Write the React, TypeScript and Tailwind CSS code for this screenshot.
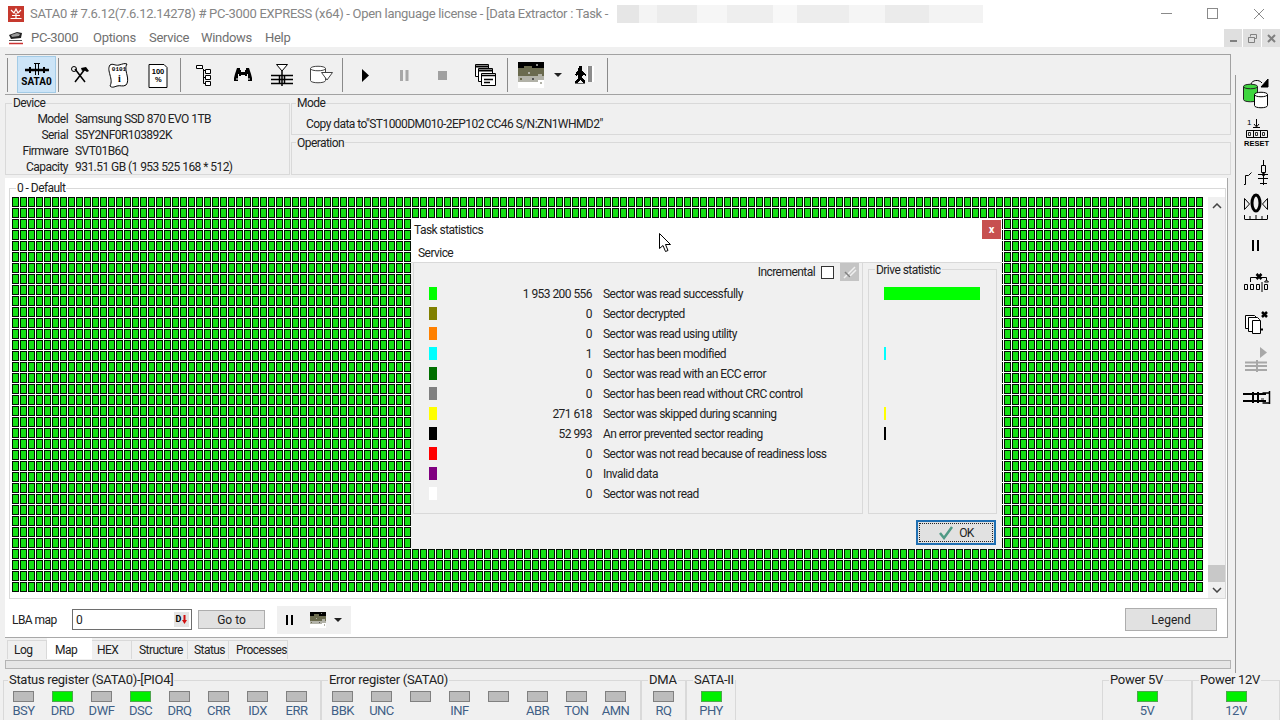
import { ReactNode } from "react";

const mapCells = Array.from({ length: 149 * 36 });

const statRows = [
  { color: "bg-[#00ff00]", value: "1 953 200 556", label: "Sector was read successfully", bar: "w-[96px] bg-[#00ff00]" },
  { color: "bg-[#808000]", value: "0", label: "Sector decrypted" },
  { color: "bg-[#ff8000]", value: "0", label: "Sector was read using utility" },
  { color: "bg-[#00ffff]", value: "1", label: "Sector has been modified", bar: "w-[2px] bg-[#00ffff]" },
  { color: "bg-[#006f00]", value: "0", label: "Sector was read with an ECC error" },
  { color: "bg-[#808080]", value: "0", label: "Sector has been read without CRC control" },
  { color: "bg-[#ffff00]", value: "271 618", label: "Sector was skipped during scanning", bar: "w-[2px] bg-[#ffff00]" },
  { color: "bg-[#000000]", value: "52 993", label: "An error prevented sector reading", bar: "w-[2px] bg-[#000000]" },
  { color: "bg-[#ff0000]", value: "0", label: "Sector was not read because of readiness loss" },
  { color: "bg-[#800080]", value: "0", label: "Invalid data" },
  { color: "bg-[#ffffff]", value: "0", label: "Sector was not read" },
];

const deviceRows = [
  ["Model", "Samsung SSD 870 EVO 1TB"],
  ["Serial", "S5Y2NF0R103892K"],
  ["Firmware", "SVT01B6Q"],
  ["Capacity", "931.51 GB (1 953 525 168 * 512)"],
];

const redaction = [
  ["w-[22px]", "bg-[#e6e6e6]"],
  ["w-[18px]", "bg-[#f4f4f4]"],
  ["w-[40px]", "bg-[#ececec]"],
  ["w-[30px]", "bg-[#f6f6f6]"],
  ["w-[46px]", "bg-[#eeeeee]"],
  ["w-[24px]", "bg-[#f8f8f8]"],
  ["w-[52px]", "bg-[#ededed]"],
  ["w-[36px]", "bg-[#f5f5f5]"],
  ["w-[44px]", "bg-[#ebebeb]"],
  ["w-[54px]", "bg-[#f3f3f3]"],
];

const tabs = [
  ["Log", "w-[40px] pl-[6px] border-l"],
  ["Map", "w-[45px] pl-[8px]"],
  ["HEX", "w-[40px] pl-[5px]"],
  ["Structure", "w-[56px] pl-[7px]"],
  ["Status", "w-[41px] pl-[6px]"],
  ["Processes", "w-[59px] pl-[7px]"],
];

function Sep() {
  return <div className="h-[34px] w-px shrink-0 bg-[#8a8a8a]" />;
}

function Tool({ children, className = "" }: { children: ReactNode; className?: string }) {
  return <div className={`flex h-[32px] w-[39px] shrink-0 items-center justify-center ${className}`}>{children}</div>;
}

function Icon({ children }: { children: ReactNode }) {
  return (
    <svg width="32" height="32" viewBox="0 0 32 32" fill="none" stroke="#000" strokeWidth="1">
      {children}
    </svg>
  );
}

function Thumb({ size }: { size: number }) {
  return (
    <svg width={size} height={size} viewBox="0 0 13 13" shapeRendering="crispEdges" className="shrink-0">
      <rect width="13" height="13" fill="#fff" />
      <rect width="13" height="4" fill="#000" />
      <rect y="3" width="13" height="4" fill="#6a6a4e" />
      <rect y="7" width="13" height="3" fill="#b2b2a8" />
      <rect x="3" y="2" width="4" height="2" fill="#6a6a4e" />
      <rect x="8" y="3" width="5" height="1" fill="#6a6a4e" />
      <rect x="9" y="1" width="1" height="1" fill="#8a8a8a" />
      <rect x="5" y="5" width="1" height="1" fill="#b2b2a8" />
      <rect x="10" y="6" width="2" height="1" fill="#b2b2a8" />
      <rect x="1" y="8" width="1" height="1" fill="#6a6a4e" />
      <rect x="7" y="8" width="1" height="1" fill="#555" />
      <rect x="10" y="9" width="3" height="1" fill="#fff" />
      <rect x="11" y="10" width="1" height="1" fill="#b2b2a8" />
    </svg>
  );
}

function Caret() {
  return <div className="h-0 w-0 shrink-0 border-x-[4px] border-t-[4px] border-x-transparent border-t-[#222]" />;
}

function Group({
  title,
  className = "",
  legend = "-top-[8px] left-[6px]",
  children,
}: {
  title: string;
  className?: string;
  legend?: string;
  children?: ReactNode;
}) {
  return (
    <div className={`relative border border-[#d9d9d9] ${className}`}>
      <span className={`absolute bg-[#f0f0f0] px-px leading-[14px] ${legend}`}>{title}</span>
      {children}
    </div>
  );
}

function Led({ on, label }: { on?: boolean; label?: string }) {
  return (
    <div className="flex w-[39px] shrink-0 flex-col items-center pt-[10px]">
      <div className={`h-[11px] w-[21px] border ${on ? "border-[#4fa54f] bg-[#00f000]" : "border-[#808080] bg-[#bcbcbc]"}`} />
      <span className="mt-[2px] h-[14px] text-[13px] leading-[14px] tracking-[-0.5px] text-[#3f5f86]">{label}</span>
    </div>
  );
}

function RegGroup({
  title,
  className,
  children,
  legend = "left-[6px]",
  center,
}: {
  title: string;
  className: string;
  children: ReactNode;
  legend?: string;
  center?: boolean;
}) {
  return (
    <div className={`relative h-[40px] shrink-0 border-x border-t border-[#d9d9d9] ${className}`}>
      <span className={`absolute -top-[8px] whitespace-nowrap bg-[#f0f0f0] px-px text-[13px] leading-[14px] tracking-[-0.3px] text-[#222] ${legend}`}>
        {title}
      </span>
      <div className={`flex ${center ? "justify-center" : ""}`}>{children}</div>
    </div>
  );
}

const sideIcons: { mt: string; icon: ReactNode }[] = [
  {
    mt: "mt-[2px]",
    icon: (
      <Icon>
        <path d="M3.5 9.5c0-3 14-3 14 0v13c0 3-14 3-14 0z" fill="#3fd63f" stroke="#222" />
        <path d="M3.5 9.5c0 3 14 3 14 0" stroke="#222" />
        <path d="M14.5 17.5c0-3 13-3 13 0v11c0 3-13 3-13 0z" fill="#fff" />
        <path d="M14.5 17.5c0 3 13 3 13 0" />
        <path d="M11 7c1-4 8-5 11-1" />
        <path d="M28 2v8h-7z" fill="#000" />
      </Icon>
    ),
  },
  {
    mt: "mt-[7px]",
    icon: (
      <Icon>
        <text x="7" y="9" fontSize="8" fill="#000" stroke="none" fontFamily="Liberation Sans, sans-serif">1</text>
        <path d="M16.500 3v7M14 8l2.500 3L19 8M13 11.500h7" />
        <path d="M6.500 14.500h21v7h-21zM13.500 14.500v7M20.500 14.500v7" />
        <path d="M8.500 16.500h2v3h-2zM15.500 16.500h2v3h-2zM22.500 16.500h2v3h-2z" strokeWidth="0.8" />
        <text x="16.500" y="30" textAnchor="middle" fontSize="7.500" fontWeight="700" letterSpacing="0" fill="#000" stroke="none" fontFamily="Liberation Sans, sans-serif">RESET</text>
      </Icon>
    ),
  },
  {
    mt: "mt-[8px]",
    icon: (
      <Icon>
        <path d="M4 28.500h1.500v-9h3l3-3" />
        <path d="M23.500 4v6M23.500 16v13" />
        <path d="M21.500 9.500h4v7h-4z" />
        <path d="M18 18.500h10M18 22.500h10M20 27.500h7" />
        <circle cx="23.500" cy="18.500" r="1.200" fill="#000" />
      </Icon>
    ),
  },
  {
    mt: "mt-[3px]",
    icon: (
      <Icon>
        <path d="M4.500 7.500l5 5.500-5 5.500zM27.500 7.500l-5 5.500 5 5.500z" />
        <ellipse cx="16" cy="12" rx="4" ry="8" strokeWidth="3" />
        <path d="M4.500 28.500h23M4.500 24v4M10 25v3M16 24v4M22 25v3M27.500 24v4" />
      </Icon>
    ),
  },
  {
    mt: "mt-[7px]",
    icon: (
      <Icon>
        <path d="M12 10h2v11h-2zM17 10h2v11h-2z" fill="#000" stroke="none" />
      </Icon>
    ),
  },
  {
    mt: "mt-[6px]",
    icon: (
      <Icon>
        <path d="M10.500 14v-4.500h16v3M26.500 12l-2 2h4z" />
        <path d="M16.500 6l5 5M21.500 6l-5 5" strokeWidth="2.500" />
        <path d="M4.500 16.500h3v5h-3zM10.500 16.500h3v5h-3zM16.500 16.500h3v5h-3zM24.500 16.500h3v5h-3z" />
        <path d="M22 14v10" />
      </Icon>
    ),
  },
  {
    mt: "mt-[6px]",
    icon: (
      <Icon>
        <path d="M5.500 9.500h9l2 2v11h-11z" fill="#fff" />
        <path d="M8.500 11.500h9l2 2v12h-11z" fill="#fff" />
        <path d="M12.500 14.500h8v13h-8z" fill="#fff" />
        <path d="M20 23.500h3" strokeWidth="2" />
        <path d="M22 6l5 5M27 6l-5 5" strokeWidth="2.500" />
      </Icon>
    ),
  },
  {
    mt: "mt-[9px]",
    icon: (
      <Icon>
        <path d="M20 0l7 5.500-7 5.500z" fill="#a8a8a8" stroke="none" />
        <path d="M5 15.500h22M5 19h22M5 23h22" stroke="#a8a8a8" strokeWidth="2" />
        <path d="M17 13v12" stroke="#a8a8a8" strokeWidth="2" />
      </Icon>
    ),
  },
  {
    mt: "mt-[3px]",
    icon: (
      <Icon>
        <path d="M3 12h23M3 19h23" strokeWidth="2" />
        <path d="M13 10v11M18 10v11" strokeWidth="2" />
        <path d="M22.500 11h7v10h-7M29.500 9v13" strokeWidth="1.500" />
        <path d="M21 17h3" stroke="#888" strokeWidth="2" />
      </Icon>
    ),
  },
];

export default function App() {
  return (
    <div className="relative flex h-[720px] w-[1280px] flex-col overflow-hidden bg-[#f0f0f0] font-['Roboto',sans-serif] text-[12px] tracking-[-0.55px] text-[#222]">
      {/* title bar */}
      <div className="flex h-[27px] shrink-0 items-center bg-white text-[13px] tracking-[-0.3px] text-[#858585]">
        <div className="ml-[8px] flex h-[16px] w-[16px] shrink-0 items-center justify-center bg-[#c6392e]">
          <svg width="14" height="14" viewBox="0 0 14 14" stroke="#fff" fill="none" strokeWidth="1.200">
            <path d="M2 3l3 3 2-4 2 4 3-3M7 6v6M1.500 11.500h11M3 8.500h8" />
          </svg>
        </div>
        <span className="ml-[6px] w-[587px] shrink-0 whitespace-nowrap">
          SATA0 # 7.6.12(7.6.12.14278) # PC-3000 EXPRESS (x64) - Open language license - [Data Extractor : Task -
        </span>
        <div className="flex h-[18px]">
          {redaction.map(([w, c], i) => (
            <div key={i} className={`${w} ${c}`} />
          ))}
        </div>
        <div className="ml-auto flex items-center">
          <div className="h-px w-[11px] bg-[#8a8a8a]" />
          <div className="ml-[35px] h-[11px] w-[11px] border border-[#8a8a8a]" />
          <svg width="12" height="12" viewBox="0 0 12 12" stroke="#8a8a8a" className="ml-[35px] mr-[15px]">
            <path d="M1 1l10 10M11 1L1 11" />
          </svg>
        </div>
      </div>

      {/* menu bar */}
      <div className="relative flex h-[20px] shrink-0 items-center bg-white pt-px text-[13px] tracking-[-0.3px] text-[#707070]">
        <svg width="16" height="14" viewBox="0 0 16 14" className="ml-[8px] shrink-0">
          <path d="M1 4l8-3 5 1-1 5-10 1z" fill="#222" />
          <path d="M3 4l6-2 3 1-1 2-7 1z" fill="#999" />
          <path d="M1 9.500h13" stroke="#555" />
          <path d="M1 12.500h14" stroke="#c33" strokeWidth="1.500" />
        </svg>
        <span className="ml-[7px] w-[62px] shrink-0">PC-3000</span>
        <span className="w-[56px] shrink-0">Options</span>
        <span className="w-[52px] shrink-0">Service</span>
        <span className="w-[64px] shrink-0">Windows</span>
        <span>Help</span>
        <div className="ml-auto flex gap-px self-start pt-[1px]">
          <div className="flex h-[18px] w-[18px] items-center justify-center bg-[#dfdfdf]">
            <div className="mt-[5px] h-[2px] w-[7px] bg-[#808080]" />
          </div>
          <div className="flex h-[18px] w-[18px] items-center justify-center bg-[#dfdfdf]">
            <svg width="9" height="9" viewBox="0 0 9 9" fill="none" stroke="#808080">
              <path d="M2.500 2.500v-2h6v4h-2M.5 3.500h6v5h-6zM.5 3.500h6" />
            </svg>
          </div>
          <div className="flex h-[18px] w-[18px] items-center justify-center bg-[#dfdfdf]">
            <svg width="9" height="9" viewBox="0 0 9 9" fill="none" stroke="#808080" strokeWidth="2">
              <path d="M1 1l7 7M8 1L1 8" />
            </svg>
          </div>
        </div>
      </div>

      <div className="flex h-[628px] shrink-0">
        {/* left column */}
        <div className="w-[1235px] shrink-0 pl-[5px] pr-[4px]">
          {/* toolbar */}
          <div className="mt-[7px] flex h-[41px] items-center border-y border-r border-[#a2a2a2]">
            <div className="ml-[2px]"><Sep /></div>
            <div className="ml-[9px] flex h-[37px] w-[39px] shrink-0 flex-col items-center border border-[#a3cbe6] bg-[#cce4f7]">
              <svg width="30" height="20" viewBox="0 0 30 20" stroke="#000" fill="none">
                <path d="M3 13h24" strokeWidth="2.500" />
                <path d="M13.500 6v12M16.500 6v12M12 6.500h6" />
                <path d="M8 10v6M22 10v6" strokeWidth="2" />
              </svg>
              <span className="mt-[-1px] text-[10px] font-bold leading-[12px] tracking-normal text-black">SATA0</span>
            </div>
            <div className="ml-[2px]"><Sep /></div>
            <Tool className="ml-px">
              <Icon>
                <path d="M11 10l10 13M21 10L11 23" strokeWidth="1.500" />
                <path d="M17 9l5-1 3 4-2 1-3-2-2 1z" fill="#000" stroke="none" />
                <circle cx="10" cy="10" r="2.500" />
              </Icon>
            </Tool>
            <Tool>
              <Icon>
                <path d="M7 6c3-2 5 1 9 0s5-2 8-1c-2 3-1 7 0 11s1 8-1 10c-3 2-6 0-9 1s-5 2-7 0c2-4 1-7 0-11S5 9 7 6z" fill="#fff" />
                <text x="16" y="12" textAnchor="middle" fontSize="6" fontWeight="700" letterSpacing="0" fill="#000" stroke="none" fontFamily="Liberation Mono, monospace">0101</text>
                <text x="16" y="23" textAnchor="middle" fontSize="10" fontWeight="700" fill="#000" stroke="none" fontFamily="Liberation Serif, serif">i</text>
              </Icon>
            </Tool>
            <Tool>
              <Icon>
                <path d="M7 5.500h15l3 3v20H7z" fill="#fff" />
                <text x="16" y="15" textAnchor="middle" fontSize="7.500" fontWeight="700" letterSpacing="0" fill="#000" stroke="none" fontFamily="Liberation Sans, sans-serif">100</text>
                <text x="16" y="23" textAnchor="middle" fontSize="7.500" fontWeight="700" fill="#000" stroke="none" fontFamily="Liberation Sans, sans-serif">%</text>
              </Icon>
            </Tool>
            <div className="ml-[3px]"><Sep /></div>
            <Tool className="ml-[3px]">
              <Icon>
                <path d="M8.500 6.500h6v3h-6zM17.500 10.500h5v4h-5zM17.500 16.500h5v4h-5zM17.500 22.500h5v4h-5z" fill="#fff" />
                <path d="M14 9l3 3M15.500 10v14.500h2M15.500 18.500h2" />
              </Icon>
            </Tool>
            <Tool>
              <Icon>
                <path d="M10 9h3v2h1v6h-2v-2h-1v7H7v-3l1-4z" fill="#000" stroke="none" />
                <path d="M22 9h-3v2h-1v6h2v-2h1v7h4v-3l-1-4z" fill="#000" stroke="none" />
                <path d="M14 13h4v3h-4z" fill="#000" stroke="none" />
                <path d="M9 20h2M21 20h2" stroke="#fff" />
              </Icon>
            </Tool>
            <Tool>
              <Icon>
                <path d="M10.500 5.500h11L16 12z" fill="#fff" />
                <path d="M5 16.500h22M5 20.500h22M5 24.500h22" strokeWidth="1.500" />
                <path d="M16 12v15M13.500 16v9M18.500 16v9" strokeWidth="1.500" />
              </Icon>
            </Tool>
            <Tool>
              <Icon>
                <path d="M5.500 9.500c0-3 15-3 15 0v12c0 3-15 3-15 0z" fill="#fff" stroke="#444" />
                <path d="M5.500 9.500c0 3 15 3 15 0" stroke="#444" />
                <path d="M16.500 13.500h11L22 21z" fill="#fff" stroke="#444" />
              </Icon>
            </Tool>
            <div className="ml-[2px]"><Sep /></div>
            <Tool className="ml-[3px]">
              <Icon>
                <path d="M12 10l7 6.500L12 23z" fill="#000" stroke="none" />
              </Icon>
            </Tool>
            <Tool>
              <Icon>
                <path d="M11 11h3v11h-3zM16.500 11h3v11h-3z" fill="#a8a8a8" stroke="none" />
              </Icon>
            </Tool>
            <Tool>
              <Icon>
                <path d="M10 12h9v9h-9z" fill="#a0a0a0" stroke="none" />
              </Icon>
            </Tool>
            <Tool className="ml-[3px]">
              <Icon>
                <path d="M5.500 5.500h13v12h-13z" fill="#fff" />
                <path d="M5.500 7.500h13" strokeWidth="2" />
                <path d="M8.500 9.500h14v13h-14z" fill="#fff" />
                <path d="M8.500 11.500h14" strokeWidth="2" />
                <path d="M11.500 14.500h14v12h-14z" fill="#fff" />
                <path d="M11.500 16.500h14M14 20.500h9M14 23.500h6" strokeWidth="1.500" />
              </Icon>
            </Tool>
            <div className="ml-[2px]"><Sep /></div>
            <div className="ml-[10px]"><Thumb size={26} /></div>
            <div className="ml-[10px]"><Caret /></div>
            <svg width="20" height="20" viewBox="0 0 20 20" shapeRendering="crispEdges" className="ml-[12px] shrink-0">
              <rect x="13" y="1" width="7" height="16" fill="#fff" />
              <rect x="14" y="1" width="4" height="16" fill="#8c8c8c" />
              <path d="M5 1h3v4H7l3 3 2 1v2l-3-1-1 3 3 3v2H9l-3-3-2 3H1v-2l3-3V9L2 11 1 10l3-5z" fill="#000" />
              <rect x="1" y="18" width="10" height="1" fill="#666" />
            </svg>
            <div className="ml-[13px]"><Sep /></div>
          </div>

          {/* device + mode */}
          <div className="mt-[8px] flex h-[72px] gap-px">
            <Group title="Device" className="w-[285px] shrink-0">
              <div className="pt-[7px]">
                {deviceRows.map(([k, v]) => (
                  <div key={k} className="flex h-[16px] items-center">
                    <span className="w-[62px] shrink-0 text-right">{k}</span>
                    <span className="ml-[7px] whitespace-nowrap">{v}</span>
                  </div>
                ))}
              </div>
            </Group>
            <div className="flex flex-1 flex-col justify-between">
              <Group title="Mode" legend="-top-[8px] left-[4px]" className="h-[32px]">
                <div className="pl-[14px] pt-[13px] leading-[14px]">Copy data to"ST1000DM010-2EP102 CC46 S/N:ZN1WHMD2"</div>
              </Group>
              <Group title="Operation" legend="-top-[7px] left-[4px]" className="h-[33px]" />
            </div>
          </div>

          {/* map panel */}
          <div className="mt-[3px] h-[460px] w-[1223px] border-b border-r border-[#a8a8a8] bg-white pl-[4px] pt-[10px]">
            <div className="relative flex h-[411px] w-[1217px] border border-[#d9d9d9] pl-[2px] pt-[8px]">
              <span className="absolute -top-[8px] left-[6px] bg-white px-px leading-[14px]">0 - Default</span>
              <div className="grid h-[395px] shrink-0 grid-cols-[repeat(149,7px)] auto-rows-[10px] gap-px">
                {mapCells.map((_, i) => (
                  <div key={i} className="border border-[#021002] bg-[#14e014]" />
                ))}
              </div>
              <div className="ml-[5px] flex h-[401px] w-[17px] flex-col bg-[#f0f0f0]">
                <div className="flex h-[18px] items-center justify-center">
                  <svg width="10" height="6" viewBox="0 0 10 6" stroke="#444" strokeWidth="1.500" fill="none"><path d="M1 5l4-4 4 4" /></svg>
                </div>
                <div className="flex-1" />
                <div className="h-[17px] bg-[#c8c8c8]" />
                <div className="flex h-[16px] items-center justify-center">
                  <svg width="10" height="6" viewBox="0 0 10 6" stroke="#444" strokeWidth="1.500" fill="none"><path d="M1 1l4 4 4-4" /></svg>
                </div>
              </div>
            </div>
            <div className="mt-[9px] flex h-[23px] items-center">
              <span className="ml-[3px] w-[60px] shrink-0">LBA map</span>
              <div className="flex h-[21px] w-[120px] shrink-0 items-center border border-[#6e6e6e] pl-[3px]">
                <span className="flex-1">0</span>
                <div className="mr-[2px] flex h-[15px] w-[15px] items-center justify-center gap-px bg-[#e4e4e4]">
                  <span className="text-[9px] font-bold leading-none tracking-normal text-black">D</span>
                  <svg width="5" height="9" viewBox="0 0 5 9" fill="#d01010"><path d="M1.500 0h2v5H5L2.500 9 0 5h1.500z" /></svg>
                </div>
              </div>
              <div className="ml-[6px] flex h-[19px] w-[67px] shrink-0 items-center justify-center border border-[#adadad] bg-[#e1e1e1] tracking-normal">Go to</div>
              <div className="ml-[12px] flex h-[28px] w-[74px] shrink-0 items-center bg-[#f0f0f0]">
                <div className="ml-[9px] flex gap-[3px]">
                  <div className="h-[10px] w-[2px] bg-black" />
                  <div className="h-[10px] w-[2px] bg-black" />
                </div>
                <div className="ml-[17px]"><Thumb size={16} /></div>
                <div className="ml-[8px]"><Caret /></div>
              </div>
              <div className="ml-[774px] flex h-[23px] w-[92px] shrink-0 items-center justify-center border border-[#adadad] bg-[#e1e1e1] tracking-normal">Legend</div>
            </div>
          </div>

          {/* tabs */}
          <div className="flex h-[21px] items-end pl-[2px]">
            {tabs.map(([t, w]) =>
              t === "Map" ? (
                <div key={t} className={`flex h-[21px] items-center bg-white pt-[3px] ${w}`}>{t}</div>
              ) : (
                <div key={t} className={`flex h-[19px] items-center border-r border-t border-[#d9d9d9] pb-px ${w}`}>{t}</div>
              ),
            )}
          </div>
          <div className="mt-px h-[9px] w-[1226px] border border-[#b4b4b4] bg-[#e6e6e6]" />
        </div>

        {/* right tool strip */}
        <div className="mt-[28px] flex flex-1 flex-col items-center border-l border-[#9a9a9a] pr-[5px]">
          {sideIcons.map((s, i) => (
            <div key={i} className={`shrink-0 ${s.mt}`}>{s.icon}</div>
          ))}
        </div>
      </div>

      {/* registers */}
      <div className="ml-[3px] mt-[5px] flex">
        <RegGroup title="Status register (SATA0)-[PIO4]" legend="left-[4px]" className="w-[318px]">
          <Led label="BSY" />
          <Led on label="DRD" />
          <Led label="DWF" />
          <Led on label="DSC" />
          <Led label="DRQ" />
          <Led label="CRR" />
          <Led label="IDX" />
          <Led label="ERR" />
        </RegGroup>
        <RegGroup title="Error register (SATA0)" className="w-[320px]">
          <div className="ml-px flex">
            <Led label="BBK" />
            <Led label="UNC" />
            <Led />
            <Led label="INF" />
            <Led />
            <Led label="ABR" />
            <Led label="TON" />
            <Led label="AMN" />
          </div>
        </RegGroup>
        <RegGroup title="DMA" className="w-[45px]" center>
          <Led label="RQ" />
        </RegGroup>
        <RegGroup title="SATA-II" className="w-[50px]" center>
          <Led on label="PHY" />
        </RegGroup>
        <div className="w-[366px] shrink-0" />
        <RegGroup title="Power 5V" className="w-[90px]" center>
          <Led on label="5V" />
        </RegGroup>
        <RegGroup title="Power 12V" className="w-[88px]" center>
          <Led on label="12V" />
        </RegGroup>
      </div>

      {/* task statistics dialog */}
      <div className="absolute left-[411px] top-[219px] flex h-[330px] w-[591px] flex-col bg-[#f0f0f0]">
        <div className="relative h-[44px] shrink-0 border-b border-[#d9d9d9] bg-white">
          <div className="pl-[3px] pt-[4px] leading-[14px]">Task statistics</div>
          <div className="pl-[7px] pt-[9px] leading-[14px]">Service</div>
          <div className="absolute right-[1px] top-[1px] flex h-[19px] w-[19px] items-center justify-center bg-[#c75050] text-[11px] font-bold leading-none tracking-normal text-white">x</div>
        </div>
        <div className="flex h-[251px] shrink-0 pl-[2px]">
          <div className="h-full w-[450px] shrink-0 border-x border-b border-[#d9d9d9]">
            <div className="flex h-[18px] items-center justify-end pr-[3px]">
              <span>Incremental</span>
              <div className="ml-[6px] h-[13px] w-[13px] border border-[#333] bg-white" />
              <div className="ml-[6px] flex h-[18px] w-[19px] items-center justify-center bg-[#c4c4c4]">
                <svg width="15" height="15" viewBox="0 0 15 15" stroke="#f0f0f0" strokeWidth="1.500" fill="none">
                  <path d="M13 2L4 11M14 5l-7 7M2 13l3-3" />
                  <path d="M3 7l5 5" stroke="#808080" />
                </svg>
              </div>
            </div>
            <div className="mt-[3px]">
              {statRows.map((r) => (
                <div key={r.label} className="flex h-[20px] items-center">
                  <div className={`ml-[15px] mb-px h-[13px] w-[8px] shrink-0 ${r.color}`} />
                  <span className="w-[155px] shrink-0 text-right">{r.value}</span>
                  <span className="ml-[11px] whitespace-nowrap">{r.label}</span>
                </div>
              ))}
            </div>
          </div>
          <Group title="Drive statistic" legend="-top-[7px] left-[6px]" className="ml-[5px] mt-[6px] h-[245px] w-[129px] shrink-0">
            <div className="pt-[14px]">
              {statRows.map((r) => (
                <div key={r.label} className="flex h-[20px] items-center pl-[15px]">
                  {r.bar && <div className={`mb-px h-[13px] ${r.bar}`} />}
                </div>
              ))}
            </div>
          </Group>
        </div>
        <div className="flex justify-end pr-[6px] pt-[6px]">
          <div className="h-[25px] w-[80px] border-2 border-[#1f6fb2] bg-[#e1e1e1] p-px">
            <div className="flex h-full items-center justify-center gap-[5px] border border-dotted border-[#222]">
              <svg width="16" height="14" viewBox="0 0 16 14" fill="none" stroke="#4f9a85" strokeWidth="2.500">
                <path d="M2 7l4 5 8-11" />
              </svg>
              <span>OK</span>
            </div>
          </div>
        </div>
      </div>

      {/* mouse pointer */}
      <svg width="13" height="20" viewBox="0 0 13 20" className="absolute left-[659px] top-[233px]">
        <path d="M.5.500v15l3.500-3 2.500 6 2.500-1-2.500-6h5z" fill="#fff" stroke="#000" />
      </svg>
    </div>
  );
}
